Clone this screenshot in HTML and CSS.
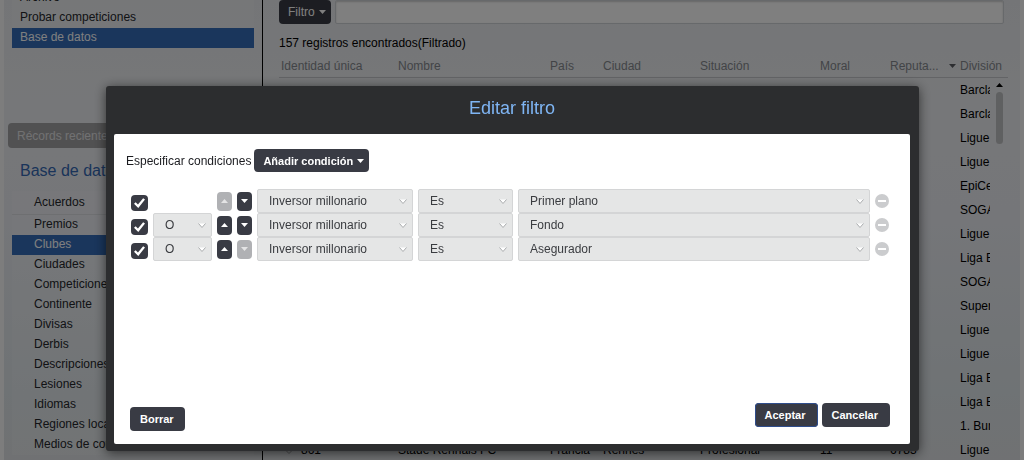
FILE: index.html
```html
<!DOCTYPE html>
<html lang="es">
<head>
<meta charset="utf-8">
<title>Editar filtro</title>
<link rel="stylesheet" href="styles.css">
</head>
<body>
<div class="app">
  <aside class="sidebar">
    <nav class="menu">
      <a class="menu-item" href="#">Archivo</a>
      <a class="menu-item" href="#">Probar competiciones</a>
      <a class="menu-item selected" href="#">Base de datos</a>
    </nav>
    <button class="recent" type="button">Récords recientes</button>
    <h2 class="side-title">Base de datos</h2>
    <nav class="menu tree">
      <a class="menu-item first" href="#">Acuerdos</a>
      <a class="menu-item" href="#">Premios</a>
      <a class="menu-item selected" href="#">Clubes</a>
      <a class="menu-item" href="#">Ciudades</a>
      <a class="menu-item" href="#">Competiciones</a>
      <a class="menu-item" href="#">Continente</a>
      <a class="menu-item" href="#">Divisas</a>
      <a class="menu-item" href="#">Derbis</a>
      <a class="menu-item" href="#">Descripciones</a>
      <a class="menu-item" href="#">Lesiones</a>
      <a class="menu-item" href="#">Idiomas</a>
      <a class="menu-item" href="#">Regiones locales</a>
      <a class="menu-item" href="#">Medios de comunicación</a>
    </nav>
  </aside>
  <main class="content">
    <div class="search-bar">
      <button class="btn search-btn" type="button">Filtro <svg class="caret" viewBox="0 0 7 4"><path d="M0 0h7L3.500 4z"/></svg></button>
      <input class="search" type="text" aria-label="Buscar">
    </div>
    <p class="count">157 registros encontrados(Filtrado)</p>
    <div class="records-wrap">
      <table class="records">
        <colgroup><col class="c-id"><col><col class="c-country"><col class="c-city"><col class="c-status"><col class="c-short"><col class="c-short"><col class="c-division"></colgroup>
        <thead>
          <tr><th>Identidad única</th><th>Nombre</th><th>País</th><th>Ciudad</th><th>Situación</th><th>Moral</th><th><span class="sorted">Reputa... <svg class="caret" viewBox="0 0 7 4"><path d="M0 0h7L3.500 4z"/></svg></span></th><th>División</th></tr>
        </thead>
        <tbody>
          <tr><td colspan="7"></td><td><span class="clip">Barclays</span></td></tr>
          <tr><td colspan="7"></td><td><span class="clip">Barclays</span></td></tr>
          <tr><td colspan="7"></td><td><span class="clip">Ligue 1</span></td></tr>
          <tr><td colspan="7"></td><td><span class="clip">Ligue 1</span></td></tr>
          <tr><td colspan="7"></td><td><span class="clip">EpiCentr</span></td></tr>
          <tr><td colspan="7"></td><td><span class="clip">SOGAZ</span></td></tr>
          <tr><td colspan="7"></td><td><span class="clip">Ligue 1</span></td></tr>
          <tr><td colspan="7"></td><td><span class="clip">Liga BBVA</span></td></tr>
          <tr><td colspan="7"></td><td><span class="clip">SOGAZ</span></td></tr>
          <tr><td colspan="7"></td><td><span class="clip">Super</span></td></tr>
          <tr><td colspan="7"></td><td><span class="clip">Ligue 1</span></td></tr>
          <tr><td colspan="7"></td><td><span class="clip">Ligue 1</span></td></tr>
          <tr><td colspan="7"></td><td><span class="clip">Liga BBVA</span></td></tr>
          <tr><td colspan="7"></td><td><span class="clip">Liga BBVA</span></td></tr>
          <tr><td colspan="7"></td><td><span class="clip">1. Bundesliga</span></td></tr>
          <tr><td><span class="record-id"><svg class="mark" viewBox="0 0 8 8"><path d="M4 .5 7.500 4 4 7.500.5 4z"/></svg>861</span></td><td>Stade Rennais FC</td><td>Francia</td><td>Rennes</td><td>Profesional</td><td>11</td><td>6783</td><td><span class="clip">Ligue 1</span></td></tr>
        </tbody>
      </table>
      <div class="scrollbar"><svg class="scroll-up" viewBox="0 0 7 4"><path d="M3.500 0 7 4H0z"/></svg><div class="thumb"></div></div>
    </div>
  </main>
</div>

<div class="overlay">
  <section class="dialog" role="dialog" aria-modal="true" aria-labelledby="dialog-title">
    <h1 class="dialog-title" id="dialog-title">Editar filtro</h1>
    <form class="dialog-body">
      <div class="add-line">
        <span>Especificar condiciones</span>
        <button class="btn add" type="button">Añadir condición <svg class="caret" viewBox="0 0 7 4"><path d="M0 0h7L3.500 4z"/></svg></button>
      </div>
      <div class="conditions">
        <div class="condition">
          <input class="check" type="checkbox" checked aria-label="Condición 1 activa">
          <span></span>
          <button class="move" type="button" disabled aria-label="Subir"><svg viewBox="0 0 7 4"><path d="M3.500 0 7 4H0z"/></svg></button>
          <button class="move" type="button" aria-label="Bajar"><svg viewBox="0 0 7 4"><path d="M0 0h7L3.500 4z"/></svg></button>
          <div class="field"><select aria-label="Campo"><option>Inversor millonario</option></select><svg class="arrow" viewBox="0 0 8 6"><path d="M.5 .5 4 4.500 7.500.5"/></svg></div>
          <div class="field"><select aria-label="Operador"><option>Es</option></select><svg class="arrow" viewBox="0 0 8 6"><path d="M.5 .5 4 4.500 7.500.5"/></svg></div>
          <div class="field"><select aria-label="Valor"><option>Primer plano</option></select><svg class="arrow" viewBox="0 0 8 6"><path d="M.5 .5 4 4.500 7.500.5"/></svg></div>
          <button class="remove" type="button" aria-label="Eliminar"><svg viewBox="0 0 14 14"><circle cx="7" cy="7" r="7"/><path d="M3 7h8"/></svg></button>
        </div>
        <div class="condition">
          <input class="check" type="checkbox" checked aria-label="Condición 2 activa">
          <div class="field"><select aria-label="Conector"><option>O</option></select><svg class="arrow" viewBox="0 0 8 6"><path d="M.5 .5 4 4.500 7.500.5"/></svg></div>
          <button class="move" type="button" aria-label="Subir"><svg viewBox="0 0 7 4"><path d="M3.500 0 7 4H0z"/></svg></button>
          <button class="move" type="button" aria-label="Bajar"><svg viewBox="0 0 7 4"><path d="M0 0h7L3.500 4z"/></svg></button>
          <div class="field"><select aria-label="Campo"><option>Inversor millonario</option></select><svg class="arrow" viewBox="0 0 8 6"><path d="M.5 .5 4 4.500 7.500.5"/></svg></div>
          <div class="field"><select aria-label="Operador"><option>Es</option></select><svg class="arrow" viewBox="0 0 8 6"><path d="M.5 .5 4 4.500 7.500.5"/></svg></div>
          <div class="field"><select aria-label="Valor"><option>Fondo</option></select><svg class="arrow" viewBox="0 0 8 6"><path d="M.5 .5 4 4.500 7.500.5"/></svg></div>
          <button class="remove" type="button" aria-label="Eliminar"><svg viewBox="0 0 14 14"><circle cx="7" cy="7" r="7"/><path d="M3 7h8"/></svg></button>
        </div>
        <div class="condition">
          <input class="check" type="checkbox" checked aria-label="Condición 3 activa">
          <div class="field"><select aria-label="Conector"><option>O</option></select><svg class="arrow" viewBox="0 0 8 6"><path d="M.5 .5 4 4.500 7.500.5"/></svg></div>
          <button class="move" type="button" aria-label="Subir"><svg viewBox="0 0 7 4"><path d="M3.500 0 7 4H0z"/></svg></button>
          <button class="move" type="button" disabled aria-label="Bajar"><svg viewBox="0 0 7 4"><path d="M0 0h7L3.500 4z"/></svg></button>
          <div class="field"><select aria-label="Campo"><option>Inversor millonario</option></select><svg class="arrow" viewBox="0 0 8 6"><path d="M.5 .5 4 4.500 7.500.5"/></svg></div>
          <div class="field"><select aria-label="Operador"><option>Es</option></select><svg class="arrow" viewBox="0 0 8 6"><path d="M.5 .5 4 4.500 7.500.5"/></svg></div>
          <div class="field"><select aria-label="Valor"><option>Asegurador</option></select><svg class="arrow" viewBox="0 0 8 6"><path d="M.5 .5 4 4.500 7.500.5"/></svg></div>
          <button class="remove" type="button" aria-label="Eliminar"><svg viewBox="0 0 14 14"><circle cx="7" cy="7" r="7"/><path d="M3 7h8"/></svg></button>
        </div>
      </div>
      <div class="actions">
        <button class="btn" type="button">Borrar</button>
        <div class="confirm">
          <button class="btn primary" type="button">Aceptar</button>
          <button class="btn" type="button">Cancelar</button>
        </div>
      </div>
    </form>
  </section>
</div>
</body>
</html>
```

FILE: styles.css
```css
* { box-sizing: border-box; }

body {
  margin: 0;
  height: 100vh;
  overflow: hidden;
  background: #fbfbfb;
  color: #24262b;
  font: 12px/20px "Liberation Sans", Arial, sans-serif;
}

button, input, select { font: inherit; margin: 0; }
svg { display: block; }

/* Main window */
.app {
  display: grid;
  grid-template-columns: 259px minmax(0, 1fr);
  height: 100vh;
  overflow: hidden;
  margin: 0 4px;
  background: linear-gradient(#e9ebef, #edeff2 22%, #ebedf3 45%, #dfe6ea 85%, #e0e3e6);
}

.sidebar {
  border-right: 1px solid #000;
  padding: 0 8px 0 4px;
}

.menu {
  display: flex;
  flex-direction: column;
  margin: -12px 0 0 4px;
  background: rgba(255, 255, 255, .15);
}

.menu-item {
  padding: 0 8px;
  height: 20px;
  line-height: 19px;
  color: #24262b;
  text-decoration: none;
  white-space: nowrap;
}

.menu-item.selected { background: #346cb9; color: #fff; }

.recent {
  display: block;
  width: 100%;
  height: 25px;
  margin-top: 75px;
  padding: 0 9px;
  border: 0;
  border-radius: 4px;
  background: #a2a2a4;
  color: #e2e2e4;
  text-align: left;
}

.side-title {
  margin: 13px 0 10px 12px;
  font-size: 16px;
  line-height: 20px;
  font-weight: normal;
  color: #3468b4;
}

.tree { margin-top: 0; }
.tree .menu-item { padding-left: 22px; }
.tree .first { height: 24px; line-height: 23px; border-bottom: 1px solid #dcdfe3; }

.content { padding: 0 12px 0 16px; }

.search-bar {
  display: flex;
  gap: 4px;
  margin-right: 4px;
}

.btn {
  display: inline-flex;
  align-items: center;
  gap: 4px;
  height: 24px;
  padding: 0 11px 0 10px;
  border: 0;
  border-radius: 4px;
  background: #393b44;
  color: #fff;
  font-size: 11px;
  font-weight: bold;
  white-space: nowrap;
}

.caret { width: 7px; height: 4px; fill: currentColor; }

.search-btn { padding: 0 5px 0 9px; font-size: 12px; font-weight: normal; }

.search {
  flex: 1;
  min-width: 0;
  height: 24px;
  border: 1px solid #cfd2d6;
  border-radius: 2px;
  background: #fff;
  box-shadow: inset 0 1px 2px rgba(0, 0, 0, .2);
}

.count { margin: 9px 0 0; color: #000; }

.records-wrap { position: relative; }

.records {
  width: 100%;
  table-layout: fixed;
  border-collapse: separate;
  border-spacing: 0;
  color: #000;
}

.records th {
  height: 25px;
  padding: 1px 2px 0;
  border-bottom: 1px solid #c6c9cd;
  color: #85898e;
  font-weight: normal;
  text-align: left;
  white-space: nowrap;
}

.records td { height: 24px; padding: 0 2px; white-space: nowrap; }

.c-id { width: 117px; }
.c-country { width: 53px; }
.c-city { width: 97px; }
.c-status { width: 120px; }
.c-short { width: 70px; }
.c-division { width: 50px; }

.sorted { display: flex; align-items: center; justify-content: space-between; }
.sorted .caret { color: #5a5d62; }
.clip { display: block; width: 30px; overflow: hidden; }
.record-id { display: flex; align-items: center; gap: 8px; padding-left: 4px; }
.mark { width: 8px; height: 8px; fill: none; stroke: #999; }

.scrollbar {
  position: absolute;
  top: 30px;
  right: 4px;
  width: 8px;
}

.scroll-up { width: 7px; height: 4px; }

.thumb {
  width: 7px;
  height: 52px;
  margin-top: 5px;
  border-radius: 4px;
  background: #bfc0c2;
}

/* Filter dialog */
.overlay {
  position: fixed;
  inset: 0;
  display: flex;
  padding: 86px 105px 9px 106px;
  background: rgba(0, 0, 0, .5);
}

.dialog {
  flex: 1;
  min-width: 0;
  display: flex;
  flex-direction: column;
  padding: 0 9px 7px 8px;
  border-radius: 3px;
  background: #2c2d2f;
  box-shadow: 0 2px 12px rgba(0, 0, 0, .6);
}

.dialog-title {
  margin: 0;
  padding: 10px 0 14px;
  font-size: 18px;
  line-height: 24px;
  font-weight: normal;
  text-align: center;
  color: #7fb5f4;
}

.dialog-body {
  flex: 1;
  display: flex;
  flex-direction: column;
  padding: 15px 20px 13px 16px;
  border-radius: 2px;
  background: #fff;
}

.add-line {
  display: flex;
  align-items: center;
  gap: 3px;
  margin-left: -4px;
  color: #1b1c20;
}

.add { height: 23px; padding: 0 5px 0 9px; }

.conditions { margin-top: 17px; }

.condition {
  display: grid;
  grid-template-columns: 17px 59px 15px 15px 156px 95px minmax(0, 1fr) 14px;
  gap: 5px;
  align-items: center;
  height: 24px;
  padding: 0 1px;
}

.check {
  appearance: none;
  align-self: end;
  display: grid;
  place-items: center;
  width: 17px;
  height: 16px;
  margin-bottom: 2px;
  border-radius: 4px;
  background: #393b44;
}

.check::before {
  content: "";
  width: 11px;
  height: 10px;
  background: #fff;
  clip-path: polygon(0 58%, 15% 42%, 36% 65%, 83% 3%, 100% 15%, 39% 100%);
}

.move {
  display: grid;
  place-items: center;
  width: 15px;
  height: 19px;
  padding: 0;
  border: 0;
  border-radius: 4px;
  background: #393b44;
}

.move svg { width: 7px; height: 4px; fill: #fff; }
.move:disabled { background: #b0b1b4; }
.move:disabled svg { fill: #e4e4e5; }

.field { position: relative; }

.field select {
  appearance: none;
  display: block;
  width: 100%;
  height: 24px;
  padding: 0 20px 0 11px;
  border: 1px solid #d4d5d6;
  border-radius: 2px;
  background: #e5e6e6;
  color: #3a3c40;
}

.arrow {
  position: absolute;
  top: 10px;
  right: 6px;
  width: 8px;
  height: 6px;
  fill: #fff;
  stroke: #aaacae;
  pointer-events: none;
}

.remove { width: 14px; height: 14px; padding: 0; border: 0; background: none; }
.remove svg { width: 14px; height: 14px; fill: #cbccce; stroke: none; }
.remove path { stroke: #fff; stroke-width: 2; }

.actions {
  display: flex;
  align-items: flex-end;
  justify-content: space-between;
  margin-top: auto;
}

.confirm { display: flex; gap: 4px; margin-bottom: 4px; }
.confirm .btn { padding: 0 12px 0 10px; }
.primary { box-shadow: inset 0 0 0 1px #2f4d8c; }
```
